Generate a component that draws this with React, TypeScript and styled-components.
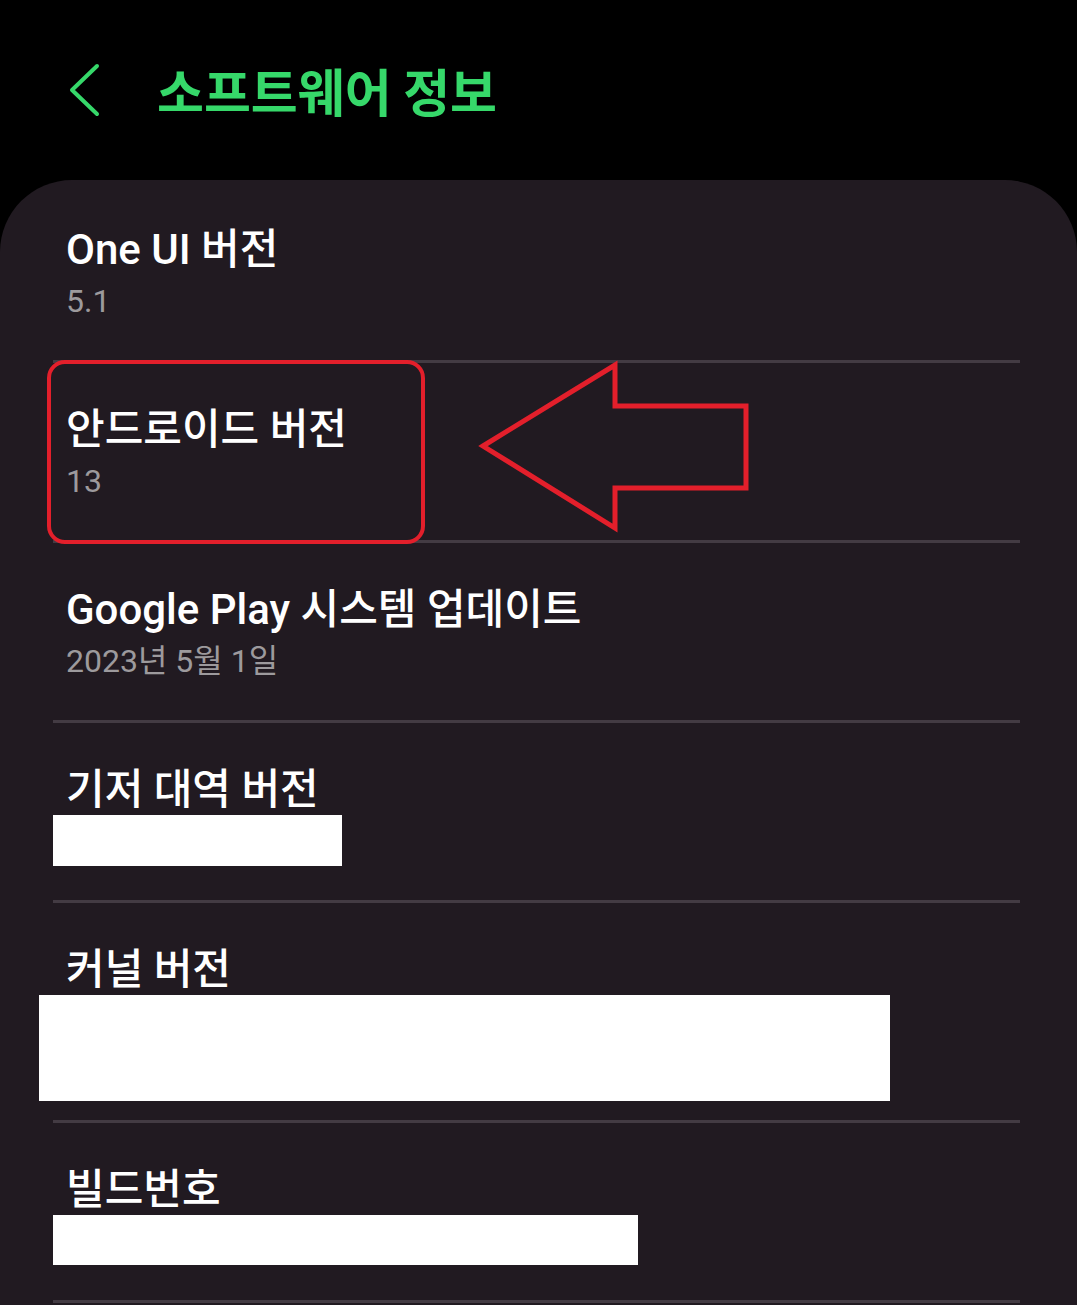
import React from "react";
import styled, { createGlobalStyle } from "styled-components";

const GlobalStyle = createGlobalStyle`
  html, body {
    margin: 0;
    padding: 0;
    background: #000;
  }
  * { box-sizing: border-box; }
`;

const Page = styled.div`
  min-height: 1305px;
  display: flex;
  flex-direction: column;
  background: #000;
  font-family: Roboto, "Noto Sans CJK KR", sans-serif;
`;

const Header = styled.header`
  height: 180px;
  display: flex;
  align-items: center;
  gap: 55px;
  padding-left: 68px;
`;

const BackIcon = styled.svg`
  width: 34px;
  height: 56px;
  flex: none;
  margin-top: -2px;
`;

const HeaderTitle = styled.h1`
  margin: 0;
  font-family: "Noto Sans CJK KR", sans-serif;
  font-weight: 700;
  font-size: 51px;
  line-height: 1;
  color: #36d86a;
`;

const Card = styled.main`
  flex: 1;
  background: #211a21;
  border-radius: 72px 72px 0 0;
  padding: 3px 57px 0 53px;
`;

const Row = styled.section<{ $height: number }>`
  position: relative;
  height: ${(p) => p.$height}px;
  padding-top: 42px;
  border-bottom: 3px solid #433b43;
  display: flex;
  flex-direction: column;
  align-items: flex-start;
`;

const Title = styled.div`
  margin-left: 13px;
  font-size: 42px;
  font-weight: 500;
  line-height: 50px;
  color: #ffffff;
`;

const Subtitle = styled.div`
  margin-left: 13px;
  margin-top: 3px;
  font-size: 32px;
  line-height: 46px;
  color: #9d9a9d;
`;

const Redaction = styled.div<{ $width: number; $height: number; $shift?: number }>`
  width: ${(p) => p.$width}px;
  height: ${(p) => p.$height}px;
  margin-left: ${(p) => p.$shift ?? 0}px;
  background: #ffffff;
`;

const Highlight = styled.div`
  position: absolute;
  left: -6px;
  top: -3px;
  width: 378px;
  height: 184px;
  border: 4px solid #e31f2b;
  border-radius: 18px;
  pointer-events: none;
`;

const Arrow = styled.svg`
  position: absolute;
  left: 422px;
  top: -6px;
  width: 280px;
  height: 180px;
  overflow: visible;
  pointer-events: none;
`;

export default function App() {
  return (
    <>
      <GlobalStyle />
      <Page>
        <Header>
          <BackIcon viewBox="0 0 34 56" aria-label="뒤로">
            <polyline
              points="29,5 4,29 29,53"
              fill="none"
              stroke="#36d86a"
              strokeWidth="4"
              strokeLinecap="round"
              strokeLinejoin="round"
            />
          </BackIcon>
          <HeaderTitle>소프트웨어 정보</HeaderTitle>
        </Header>
        <Card>
          <Row $height={180}>
            <Title>One UI 버전</Title>
            <Subtitle>5.1</Subtitle>
          </Row>
          <Row $height={180}>
            <Title>안드로이드 버전</Title>
            <Subtitle>13</Subtitle>
            <Highlight />
            <Arrow viewBox="0 0 280 180">
              <polygon
                points="8,89 140,8 140,49 271,49 271,131 140,131 140,171"
                fill="none"
                stroke="#e31f2b"
                strokeWidth="5"
                strokeLinejoin="miter"
              />
            </Arrow>
          </Row>
          <Row $height={180}>
            <Title>Google Play 시스템 업데이트</Title>
            <Subtitle>2023년 5월 1일</Subtitle>
          </Row>
          <Row $height={180}>
            <Title>기저 대역 버전</Title>
            <Redaction $width={289} $height={51} />
          </Row>
          <Row $height={220}>
            <Title>커널 버전</Title>
            <Redaction $width={851} $height={106} $shift={-14} />
          </Row>
          <Row $height={180}>
            <Title>빌드번호</Title>
            <Redaction $width={585} $height={50} />
          </Row>
        </Card>
      </Page>
    </>
  );
}
